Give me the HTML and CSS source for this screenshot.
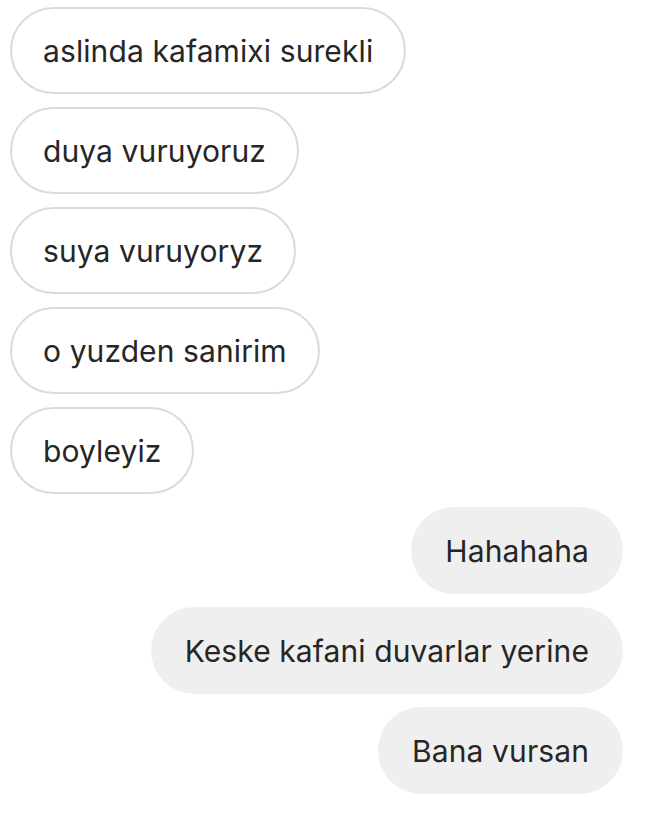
FILE: index.html
```html
<!DOCTYPE html>
<html lang="en">
<head>
    <meta charset="UTF-8">
    <meta name="viewport" content="width=device-width, initial-scale=1.0">
    <title>Messages</title>
    <link rel="stylesheet" href="styles.css">
</head>
<body>
    <div class="thread">
        <div class="msg theirs">aslinda kafamixi surekli</div>
        <div class="msg theirs">duya vuruyoruz</div>
        <div class="msg theirs">suya vuruyoryz</div>
        <div class="msg theirs">o yuzden sanirim</div>
        <div class="msg theirs">boyleyiz</div>
        <div class="msg mine">Hahahaha</div>
        <div class="msg mine">Keske kafani duvarlar yerine</div>
        <div class="msg mine">Bana vursan</div>
    </div>
</body>
</html>
```

FILE: styles.css
```css
body {
    margin: 0;
    background: #fff;
    font-family: 'Inter', 'Noto Sans', sans-serif;
    color: #262626;
}

/* Message list */
.thread {
    display: flex;
    flex-direction: column;
    gap: 13px;
    padding: 7px 23px 0 10px;
}

.msg {
    box-sizing: border-box;
    height: 87px;
    display: flex;
    align-items: center;
    padding: 0 32px;
    border-radius: 44px;
    font-size: 30px;
    letter-spacing: 0.1px;
    white-space: nowrap;
}

/* Incoming: white with grey outline */
.theirs {
    align-self: flex-start;
    border: 2px solid #dbdbdb;
    padding: 0 31px;
}

/* Outgoing: grey fill, right side */
.mine {
    align-self: flex-end;
    background: #efefef;
    padding: 0 34px;
}
```
